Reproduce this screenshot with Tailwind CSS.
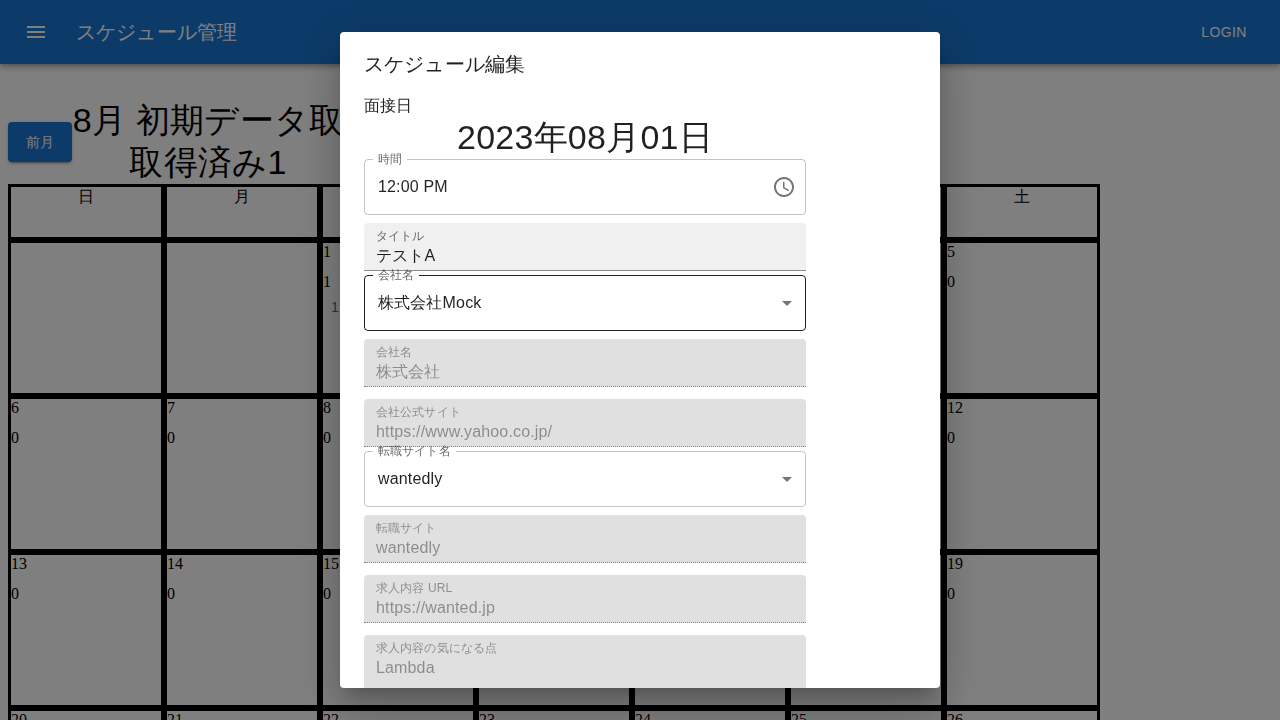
<!DOCTYPE html>
<html lang="ja">
<head>
<meta charset="utf-8">
<title>スケジュール管理</title>
<script src="https://cdn.jsdelivr.net/npm/@tailwindcss/browser@4"></script>
</head>
<body class="h-screen overflow-hidden bg-white font-['Liberation_Sans',sans-serif] text-black">
<header class="flex h-16 items-center bg-[#1976d2] px-6 text-white shadow-[0px_2px_4px_-1px_rgba(0,0,0,0.2),0px_4px_5px_0px_rgba(0,0,0,0.14),0px_1px_10px_0px_rgba(0,0,0,0.12)]">
  <svg class="mr-7 size-6 fill-current" viewBox="0 0 24 24"><path d="M3 18h18v-2H3v2zm0-5h18v-2H3v2zm0-7v2h18V6H3z"/></svg>
  <h1 class="grow text-[20px] leading-8 tracking-[0.0075em]">スケジュール管理</h1>
  <button class="w-16 text-center text-[14px] leading-[24.5px] tracking-[0.02857em]">LOGIN</button>
</header>
<main class="px-2 pt-9">
  <div class="flex h-[84px] items-center">
    <button class="h-10 w-16 shrink-0 rounded bg-[#1976d2] text-[14px] tracking-[0.02857em] text-white shadow-[0px_3px_1px_-2px_rgba(0,0,0,0.2),0px_2px_2px_0px_rgba(0,0,0,0.14),0px_1px_5px_0px_rgba(0,0,0,0.12)]">前月</button>
    <h2 class="w-[272px] shrink-0 text-center text-[34px] leading-[1.235] tracking-[0.00735em] whitespace-nowrap">8月 初期データ取<br>取得済み1</h2>
  </div>
  <div id="calendar" class="grid w-[1092px] grid-cols-7 font-['Liberation_Serif',serif] text-[16px] leading-[18px]"></div>
</main>

<div class="fixed inset-0 flex items-center justify-center bg-black/50">
  <section class="h-[656px] w-[600px] overflow-hidden rounded bg-white text-black/87 shadow-[0px_11px_15px_-7px_rgba(0,0,0,0.2),0px_24px_38px_3px_rgba(0,0,0,0.14),0px_9px_46px_8px_rgba(0,0,0,0.12)]">
    <h2 class="px-6 py-4 text-[20px] leading-8 tracking-[0.0075em]">スケジュール編集</h2>
    <div id="form" class="ml-6 flex w-[442px] flex-col text-[16px] leading-[23px] tracking-[0.00938em]">
      <p class="h-[21px] leading-[19px] tracking-normal">面接日</p>
      <h3 class="h-[42px] text-center text-[34px] leading-[1.235] tracking-[0.00735em]">2023年08月01日</h3>
    </div>
  </section>
</div>

<script>
const calendar = document.getElementById('calendar');
for (const d of ['日', '月', '火', '水', '木', '金', '土'])
  calendar.insertAdjacentHTML('beforeend', `<div class="h-14 border-3 border-black text-center leading-[20px]">${d}</div>`);
// The first week starts with two blank cells
for (let i = 0; i < 28; i++) {
  const day = i < 2 ? 0 : i - 1;
  const count = day === 1 ? 1 : 0;
  calendar.insertAdjacentHTML('beforeend', `<div class="h-[156px] border-3 border-black">${day ? `<p>${day}</p><p class="mt-3">${count}</p>` : ''}${count ? `<button class="px-2 font-['Liberation_Sans',sans-serif] text-[14px] leading-[33px] tracking-[0.02857em] text-[#1976d2]">12:00</button>` : ''}</div>`);
}

const clock = '<svg class="mr-2.5 size-6 fill-[#757575]" viewBox="0 0 24 24"><path d="M11.99 2C6.47 2 2 6.48 2 12s4.47 10 9.99 10C17.52 22 22 17.52 22 12S17.52 2 11.99 2zM12 20c-4.42 0-8-3.58-8-8s3.58-8 8-8 8 3.58 8 8-3.58 8-8 8z"/><path d="M12.5 7H11v6l5.25 3.15.75-1.23-4.5-2.67z"/></svg>';
const arrow = '<svg class="mr-[7px] size-6 fill-[#757575]" viewBox="0 0 24 24"><path d="M7 10l5 5 5-5z"/></svg>';

const outlined = (label, value, icon, border) => `
  <div class="relative flex h-14 shrink-0 items-center">
    <fieldset class="pointer-events-none absolute inset-x-0 -top-[5px] bottom-0 rounded border px-2 ${border}"><legend class="h-[11px] px-[5px] text-[12px] leading-[11px]"><span class="opacity-0">${label}</span></legend></fieldset>
    <label class="absolute top-0 left-0 origin-top-left translate-x-[14px] -translate-y-[9px] scale-75 whitespace-nowrap text-black/60">${label}</label>
    <span class="grow pb-px pl-[14px]">${value}</span>${icon}
  </div>`;
const filled = (label, value, box, labelColor) => `
  <div class="relative shrink-0 rounded-t border-b px-3 pt-[21px] ${box}">
    <label class="absolute top-0 left-0 origin-top-left translate-x-3 translate-y-1 scale-75 whitespace-nowrap ${labelColor}">${label}</label>
    ${value}
  </div>`;
const off = 'h-12 border-dotted border-black/42 bg-black/12 text-black/38';

document.getElementById('form').insertAdjacentHTML('beforeend', [
  outlined('時間', '12:00 PM', clock, 'border-black/23'),
  filled('タイトル', 'テストA', 'mt-2 h-12 border-black/42 bg-black/6', 'text-black/60'),
  '<div class="h-1 shrink-0"></div>',
  outlined('会社名', '株式会社Mock', arrow, 'border-black/87'),
  filled('会社名', '株式会社', 'mt-2 ' + off, 'text-black/38'),
  filled('会社公式サイト', 'https://www.yahoo.co.jp/', 'mt-3 ' + off, 'text-black/38'),
  '<div class="h-1 shrink-0"></div>',
  outlined('転職サイト名', 'wantedly', arrow, 'border-black/23'),
  filled('転職サイト', 'wantedly', 'mt-2 ' + off, 'text-black/38'),
  filled('求人内容 URL', 'https://wanted.jp', 'mt-3 ' + off, 'text-black/38'),
  filled('求人内容の気になる点', 'Lambda', 'mt-3 h-[71px] border-dotted border-black/42 bg-black/12 text-black/38', 'text-black/38'),
].join(''));
</script>
</body>
</html>
